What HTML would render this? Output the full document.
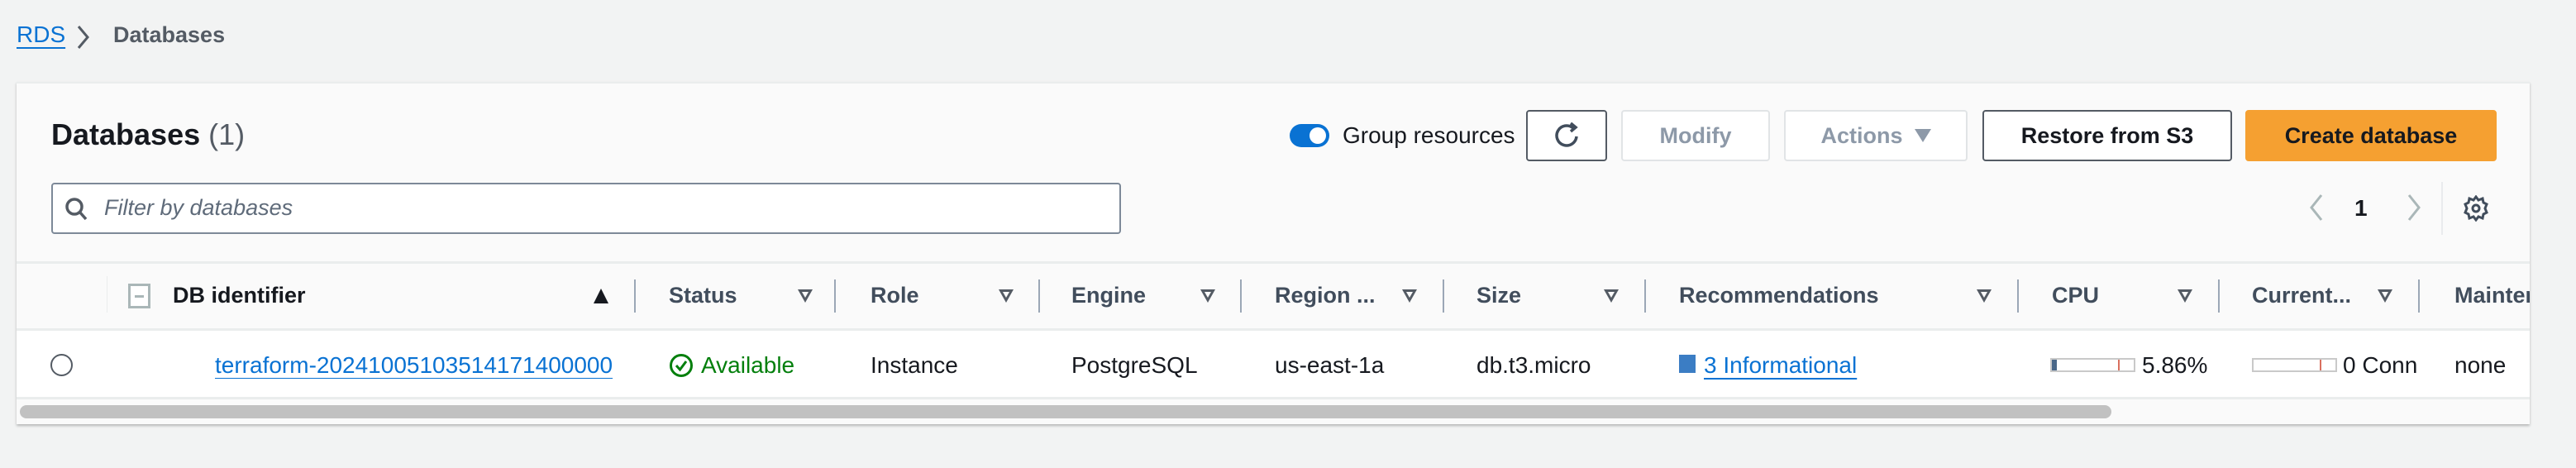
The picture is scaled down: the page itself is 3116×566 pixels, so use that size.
<!DOCTYPE html>
<html><head><meta charset="utf-8"><style>
*{box-sizing:border-box;margin:0;padding:0}
body{width:3116px;height:566px;background:#f2f3f3;font-family:"Liberation Sans",sans-serif;color:#16191f;position:relative;overflow:hidden;font-size:28px}
.a{position:absolute;white-space:nowrap}
.btn{position:absolute;top:133px;height:62px;border:2px solid #545b64;border-radius:4px;background:#fff;font-weight:bold;font-size:27px;display:flex;align-items:center;justify-content:center;color:#414d5c}
.dis{border-color:#e1e4e6;color:#8d99a8}
.h{position:absolute;top:342px;font-weight:bold;font-size:27px;color:#414d5c}
.f{position:absolute;top:350px;width:0;height:0;border-left:9px solid transparent;border-right:9px solid transparent;border-top:16px solid #545b64}
.f:after{content:"";position:absolute;left:-4px;top:-13px;border-left:4px solid transparent;border-right:4px solid transparent;border-top:7px solid #fafafa}
.d{position:absolute;top:338px;width:2px;height:40px;background:#9ba7b6}
.c{position:absolute;top:426px;font-size:28px}
</style></head><body>
<div class="a" style="left:20px;top:26px;color:#0972d3;text-decoration:underline;text-underline-offset:6px">RDS</div>
<svg class="a" style="left:92px;top:30px" width="18" height="30"><path d="M3 2 L14 15 L3 28" stroke="#545b64" stroke-width="3" fill="none"/></svg>
<div class="a" style="left:137px;top:27px;font-weight:bold;font-size:27px;color:#545b64">Databases</div>

<div class="a" style="left:20px;top:99px;width:3040px;height:414px;background:#fafafa;box-shadow:0 2px 3px rgba(0,0,0,.25);border-top:2px solid #eaeded"></div>
<div class="a" style="left:62px;top:142px;font-size:36px;font-weight:bold">Databases <span style="font-weight:normal;color:#545b64">(1)</span></div>

<div class="a" style="left:1560px;top:150px;width:48px;height:28px;border-radius:14px;background:#0972d3"><div style="position:absolute;right:4px;top:4px;width:20px;height:20px;border-radius:50%;background:#fff"></div></div>
<div class="a" style="left:1624px;top:148px;font-size:28px">Group resources</div>
<div class="btn" style="left:1846px;width:98px"><svg width="34" height="36" viewBox="0 0 34 36"><path d="M25 9 A12 12 0 1 0 29 19" stroke="#414d5c" stroke-width="3.5" fill="none"/><path d="M22 3 L28 8 L22 13" stroke="#414d5c" stroke-width="3.5" fill="none"/></svg></div>
<div class="btn dis" style="left:1961px;width:180px">Modify</div>
<div class="btn dis" style="left:2158px;width:222px">Actions <span style="display:inline-block;margin-left:14px;border-left:10px solid transparent;border-right:10px solid transparent;border-top:16px solid #8d99a8"></span></div>
<div class="btn" style="left:2398px;width:302px;color:#16191f">Restore from S3</div>
<div class="btn" style="left:2716px;width:304px;background:#f5a031;border-color:#f5a031;color:#16191f">Create database</div>

<div class="a" style="left:62px;top:221px;width:1294px;height:62px;border:2px solid #7d8998;border-radius:4px;background:#fff"></div>
<svg class="a" style="left:78px;top:238px" width="30" height="30"><circle cx="12" cy="12" r="9" stroke="#545b64" stroke-width="3.5" fill="none"/><path d="M18 18 L26 27" stroke="#545b64" stroke-width="3.5"/></svg>
<div class="a" style="left:126px;top:236px;font-style:italic;color:#5f6b7a;font-size:27px">Filter by databases</div>

<svg class="a" style="left:2792px;top:234px" width="20" height="34"><path d="M16 2 L4 17 L16 32" stroke="#aab7b8" stroke-width="3" fill="none"/></svg>
<div class="a" style="left:2848px;top:236px;font-weight:bold">1</div>
<svg class="a" style="left:2910px;top:234px" width="20" height="34"><path d="M4 2 L16 17 L4 32" stroke="#aab7b8" stroke-width="3" fill="none"/></svg>
<div class="a" style="left:2953px;top:220px;width:2px;height:64px;background:#e9ebed"></div>
<svg class="a" style="left:2980px;top:236px" width="30" height="32" viewBox="0 0 30 32"><path d="M15 2 L18 6 L23 4 L24 9 L28 11 L26 16 L28 21 L24 23 L23 28 L18 26 L15 30 L12 26 L7 28 L6 23 L2 21 L4 16 L2 11 L6 9 L7 4 L12 6 Z" stroke="#414d5c" stroke-width="3" fill="none"/><circle cx="15" cy="16" r="4" stroke="#414d5c" stroke-width="3" fill="none"/></svg>

<div class="a" style="left:20px;top:316px;width:3040px;height:3px;background:#eaeded"></div>
<div class="a" style="left:20px;top:397px;width:3040px;height:86px;background:#fff;border-top:3px solid #eaeded;border-bottom:3px solid #eaeded"></div>

<div class="a" style="left:129px;top:334px;width:1px;height:44px;background:#eaeded"></div>
<div class="a" style="left:155px;top:343px;width:27px;height:30px;border:3px solid #aab7b8;background:#fff"><div style="position:absolute;left:5px;top:11px;width:11px;height:3px;background:#aab7b8"></div></div>
<div class="h" style="left:209px;color:#16191f">DB identifier</div>
<div class="a" style="left:718px;top:349px;border-left:9px solid transparent;border-right:9px solid transparent;border-bottom:18px solid #16191f"></div>
<div class="d" style="left:767px"></div>
<div class="h" style="left:809px">Status</div><div class="f" style="left:965px"></div>
<div class="d" style="left:1009px"></div>
<div class="h" style="left:1053px">Role</div><div class="f" style="left:1208px"></div>
<div class="d" style="left:1256px"></div>
<div class="h" style="left:1296px">Engine</div><div class="f" style="left:1452px"></div>
<div class="d" style="left:1500px"></div>
<div class="h" style="left:1542px">Region ...</div><div class="f" style="left:1696px"></div>
<div class="d" style="left:1745px"></div>
<div class="h" style="left:1786px">Size</div><div class="f" style="left:1940px"></div>
<div class="d" style="left:1989px"></div>
<div class="h" style="left:2031px">Recommendations</div><div class="f" style="left:2391px"></div>
<div class="d" style="left:2440px"></div>
<div class="h" style="left:2482px">CPU</div><div class="f" style="left:2634px"></div>
<div class="d" style="left:2683px"></div>
<div class="h" style="left:2724px">Current...</div><div class="f" style="left:2876px"></div>
<div class="d" style="left:2925px"></div>
<div class="h" style="left:2969px;width:91px;overflow:hidden">Maintenance</div>

<div class="a" style="left:61px;top:428px;width:27px;height:27px;border:2px solid #545b64;border-radius:50%"></div>
<div class="c" style="left:260px;width:507px;overflow:hidden;color:#0972d3;text-decoration:underline;text-underline-offset:6px">terraform-20241005103514171400000</div>
<svg class="a" style="left:809px;top:427px" width="30" height="30"><circle cx="15" cy="15" r="12.5" stroke="#037f0c" stroke-width="3" fill="none"/><path d="M9 15 L13.5 20 L21 10" stroke="#037f0c" stroke-width="3" fill="none"/></svg>
<div class="c" style="left:848px;color:#037f0c">Available</div>
<div class="c" style="left:1053px">Instance</div>
<div class="c" style="left:1296px">PostgreSQL</div>
<div class="c" style="left:1542px">us-east-1a</div>
<div class="c" style="left:1786px">db.t3.micro</div>
<div class="a" style="left:2031px;top:429px;width:20px;height:22px;background:#3b7dc4"></div>
<div class="c" style="left:2061px;color:#0972d3;text-decoration:underline;text-underline-offset:6px">3 Informational</div>
<div class="a" style="left:2480px;top:433px;width:103px;height:17px;border:2px solid #c9c9c9;background:#fff"><div style="position:absolute;left:0;top:0;width:6px;height:13px;background:#4a6788"></div><div style="position:absolute;left:80px;top:0;width:2px;height:13px;background:#d9705f"></div></div>
<div class="c" style="left:2591px">5.86%</div>
<div class="a" style="left:2724px;top:433px;width:103px;height:17px;border:2px solid #c9c9c9;background:#fff"><div style="position:absolute;left:80px;top:0;width:2px;height:13px;background:#d9705f"></div></div>
<div class="c" style="left:2834px">0 Conn</div>
<div class="c" style="left:2969px">none</div>

<div class="a" style="left:24px;top:490px;width:2530px;height:16px;border-radius:8px;background:#c1c1c1"></div>
</body></html>
